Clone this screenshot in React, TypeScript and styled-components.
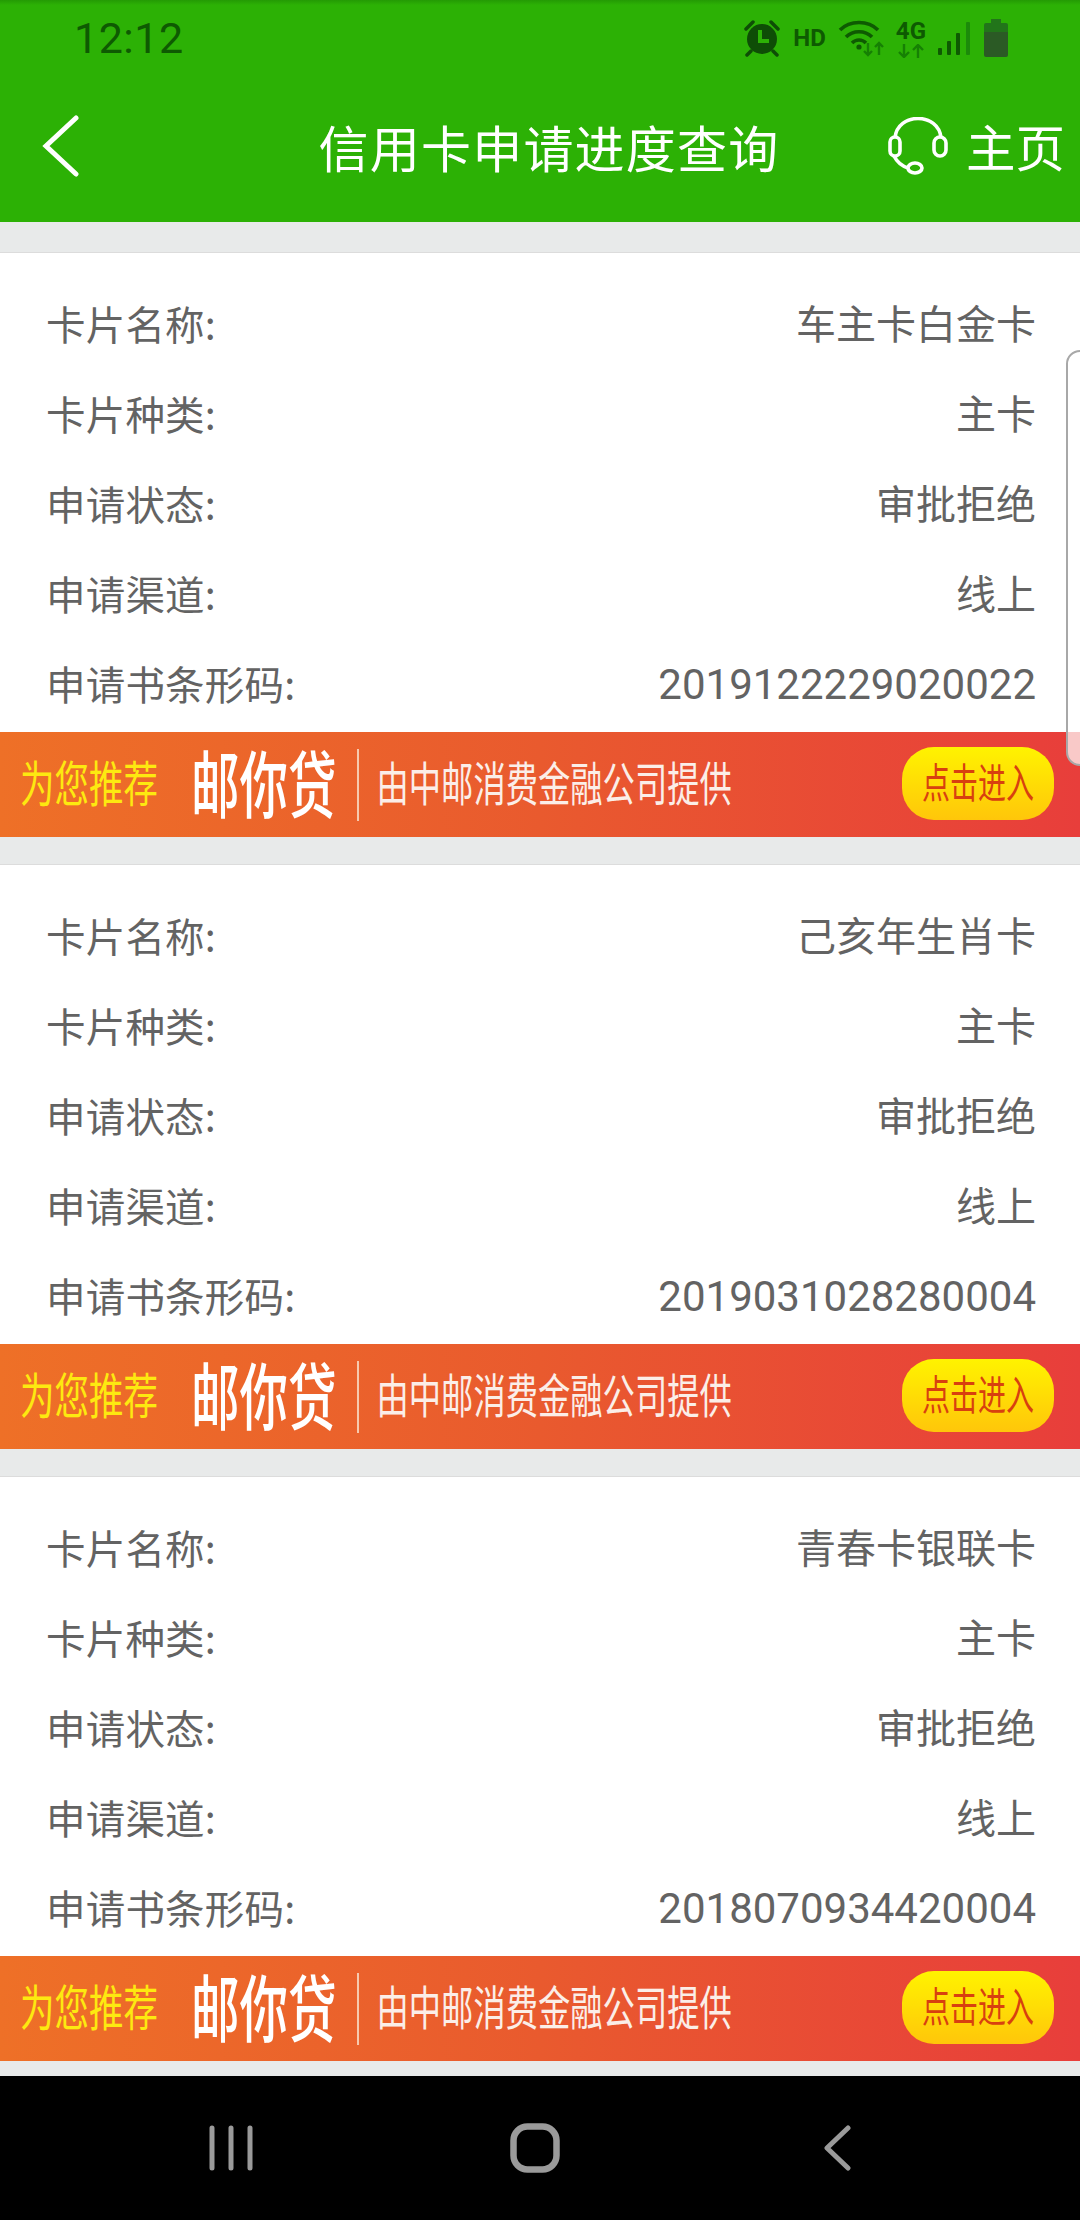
import React from "react";
import styled, { createGlobalStyle } from "styled-components";

const Global = createGlobalStyle`
  html, body { margin: 0; padding: 0; background: #000; }
  * { box-sizing: border-box; }
`;
const Screen = styled.div`
  width: 1080px; height: 2220px; display: flex; flex-direction: column; overflow: hidden; position: relative;
  background: #e8eaea; font-family: "Noto Sans CJK SC", "Noto Sans", sans-serif;
`;
const TopBar = styled.div`
  height: 222px; flex: none; display: flex; flex-direction: column;
  background: linear-gradient(#249a04 0, #2cb105 5px, #2cb105 100%);
`;
const StatusBar = styled.div`
  height: 70px; display: flex; align-items: center; padding: 6px 72px 0 74px; color: #0e5a02;
`;
const Time = styled.div`
  font: 43px Roboto, sans-serif; flex: 1; letter-spacing: 0.5px;
`;
const StatusText = styled.span`
  font: bold 24px Roboto, sans-serif; line-height: 1;
`;
const StatusIcons = styled.div`
  display: flex; align-items: center; gap: 12px;
`;
const Stack4G = styled.div`
  display: flex; flex-direction: column; align-items: center; gap: 1px; color: #0e5a02;
`;
const Header = styled.div`
  flex: 1; display: flex; align-items: center; padding: 0 15px 0 40px; color: #fff;
`;
const Title = styled.div`
  flex: 1; text-align: center; font-size: 50px; line-height: 1; padding-left: 130px; white-space: nowrap; letter-spacing: 1.2px;
`;
const HomeLink = styled.div`
  display: flex; align-items: center; gap: 18px; font-size: 49.5px; line-height: 1;
`;
const List = styled.div`
  flex: 1; padding-top: 31px; overflow: hidden; display: flex; flex-direction: column; gap: 28px; min-height: 0;
`;
const Card = styled.section`
  flex: none; background: #fff; border-top: 1px solid #dcdcdc; margin-top: -1px;
`;
const Rows = styled.div`
  padding: 24px 44px 5px 46px;
`;
const Row = styled.div`
  height: 90px; display: flex; justify-content: space-between; align-items: center;
  color: #636363; white-space: nowrap;
`;
const Label = styled.span`
  font-size: 39.5px; letter-spacing: 0.2px;
`;
const Value = styled.span<{ $digits?: boolean }>`
  font-size: ${(p) => (p.$digits ? 42 : 40)}px;
  font-family: ${(p) => (p.$digits ? "Roboto, sans-serif" : "inherit")};
  padding-top: ${(p) => (p.$digits ? 4 : 0)}px;
`;
const Banner = styled.div`
  height: 105px; display: flex; align-items: center; padding-left: 20px; white-space: nowrap;
  background: linear-gradient(90deg, #ee7027 0%, #e95a2e 50%, #e83e3b 100%); color: #fbeee8;
`;
const Stretch = styled.span<{ $size: number; $sy: number; $color?: string; $weight?: number }>`
  display: inline-block; font-size: ${(p) => p.$size}px; line-height: 1; transform: scaleY(${(p) => p.$sy});
  color: ${(p) => p.$color ?? "inherit"}; font-weight: ${(p) => p.$weight ?? 400}; margin-bottom: 6px;
`;
const Brand = styled.div`
  margin-left: 33px; flex: none;
`;
const Divider = styled.div`
  width: 2px; height: 72px; background: #f7c9ae; margin: 0 18px 0 20px;
`;
const EnterButton = styled.div`
  margin-left: auto; margin-right: 26px; margin-bottom: 2px; width: 152px; height: 73px; border-radius: 32px;
  display: flex; align-items: center; justify-content: center;
  background: linear-gradient(#fff300, #ffc60a);
`;
const ScrollHint = styled.div`
  position: absolute; right: -8px; top: 350px; width: 22px; height: 416px; border: 2px solid #a8a8a8;
  border-radius: 14px 0 0 14px; background: rgba(255, 255, 255, 0.72);
`;
const NavBar = styled.div`
  height: 144px; flex: none; background: #000; display: grid; grid-template-columns: repeat(3, 303px);
  justify-content: center; justify-items: center; align-items: center; padding-right: 10px;
`;

const cards = [
  { name: "车主卡白金卡", code: "2019122229020022" },
  { name: "己亥年生肖卡", code: "2019031028280004" },
  { name: "青春卡银联卡", code: "2018070934420004" },
];

const Alarm = () => (
  <svg width="38" height="38" viewBox="0 0 38 38" fill="#0e4d06">
    <circle cx="19" cy="20" r="15" />
    <path d="M3 10 L10 3 M35 10 L28 3 M8 32 L4 36 M30 32 L34 36" stroke="#0e4d06" strokeWidth="3.5" strokeLinecap="round" />
    <path d="M17 11 V22 H26" fill="none" stroke="#2cb105" strokeWidth="4" />
  </svg>
);
const Wifi = () => (
  <svg width="46" height="38" viewBox="0 0 46 38" fill="none" stroke="#0e5a02" strokeWidth="3.6">
    <path d="M2 11 C12 1 30 1 40 11" />
    <path d="M8 18 C15 11 27 11 34 18" />
    <path d="M14 24 C18 20 24 20 28 24" />
    <circle cx="21" cy="28" r="2.6" fill="#0e5a02" stroke="none" />
    <path d="M30 24 V36 M26 32 L30 36 L34 32" stroke="#168004" strokeWidth="2.4" />
    <path d="M41 36 V24 M37 28 L41 24 L45 28" stroke="#168004" strokeWidth="2.4" />
  </svg>
);
const Arrows = () => (
  <svg width="28" height="14" viewBox="0 0 28 14" fill="none" stroke="#168004" strokeWidth="2.4">
    <path d="M7 0 V13 M2 8 L7 13 L12 8" />
    <path d="M21 14 V1 M16 6 L21 1 L26 6" />
  </svg>
);
const Signal = () => (
  <svg width="34" height="34" viewBox="0 0 34 34" fill="#0e5a02">
    <rect x="0" y="27" width="4" height="7" rx="1" />
    <rect x="9" y="20" width="4" height="14" rx="1" />
    <rect x="18" y="12" width="4" height="22" rx="1" />
    <rect x="28" y="1" width="4" height="33" rx="1" fill="#1c8a0a" />
  </svg>
);
const Battery = () => (
  <svg width="24" height="38" viewBox="0 0 24 38">
    <rect x="7" y="0" width="10" height="5" fill="#22751a" />
    <rect x="0" y="4" width="24" height="12" rx="2" fill="#22751a" />
    <path d="M0 13 H24 V36 Q24 38 22 38 H2 Q0 38 0 36 Z" fill="#2b5a25" />
  </svg>
);
const Back = () => (
  <svg width="40" height="62" viewBox="0 0 40 62" fill="none" stroke="#fff" strokeWidth="5" strokeLinecap="round">
    <path d="M36 3 L6 31 L36 59" />
  </svg>
);
const Headset = () => (
  <svg width="60" height="58" viewBox="0 0 60 58" fill="none" stroke="#fff" strokeWidth="3.6">
    <path d="M7 21 C9 -5 51 -5 53 21" />
    <rect x="2" y="20" width="10" height="19" rx="5" />
    <rect x="46" y="20" width="12" height="19" rx="6" />
    <path d="M6 39 C9 45 14 49 20 51" />
    <ellipse cx="27" cy="51" rx="7" ry="5" />
  </svg>
);
const NavLines = () => (
  <svg width="46" height="46" viewBox="0 0 46 46" fill="none" stroke="#9a9a9a" strokeWidth="5" strokeLinecap="round">
    <path d="M3 3 V43 M22 3 V43 M41 3 V43" />
  </svg>
);
const NavHome = () => (
  <svg width="50" height="50" viewBox="0 0 50 50" fill="none" stroke="#9a9a9a" strokeWidth="6.5">
    <rect x="3.5" y="3.5" width="43" height="43" rx="14" />
  </svg>
);
const NavBack = () => (
  <svg width="28" height="46" viewBox="0 0 28 46" fill="none" stroke="#9a9a9a" strokeWidth="5" strokeLinecap="round" strokeLinejoin="round">
    <path d="M24 3 L3 23 L24 43" />
  </svg>
);

export default function App() {
  return (
    <Screen>
      <Global />
      <TopBar>
        <StatusBar>
          <Time>12:12</Time>
          <StatusIcons>
            <Alarm />
            <StatusText>HD</StatusText>
            <Wifi />
            <Stack4G>
              <StatusText>4G</StatusText>
              <Arrows />
            </Stack4G>
            <Signal />
            <Battery />
          </StatusIcons>
        </StatusBar>
        <Header>
          <Back />
          <Title>信用卡申请进度查询</Title>
          <HomeLink>
            <Headset />
            <span>主页</span>
          </HomeLink>
        </Header>
      </TopBar>
      <List>
        {cards.map((c) => (
          <Card key={c.code}>
            <Rows>
              <Row><Label>卡片名称:</Label><Value>{c.name}</Value></Row>
              <Row><Label>卡片种类:</Label><Value>主卡</Value></Row>
              <Row><Label>申请状态:</Label><Value>审批拒绝</Value></Row>
              <Row><Label>申请渠道:</Label><Value>线上</Value></Row>
              <Row><Label>申请书条形码:</Label><Value $digits>{c.code}</Value></Row>
            </Rows>
            <Banner>
              <Stretch $size={34.5} $sy={1.4} $color="#fde910">为您推荐</Stretch>
              <Brand><Stretch $size={48.5} $sy={1.5} $color="#fff" $weight={500}>邮你贷</Stretch></Brand>
              <Divider />
              <Stretch $size={32.3} $sy={1.45}>由中邮消费金融公司提供</Stretch>
              <EnterButton><Stretch $size={28} $sy={1.45} $color="#d8400f">点击进入</Stretch></EnterButton>
            </Banner>
          </Card>
        ))}
      </List>
      <ScrollHint />
      <NavBar>
        <NavLines />
        <NavHome />
        <NavBack />
      </NavBar>
    </Screen>
  );
}
